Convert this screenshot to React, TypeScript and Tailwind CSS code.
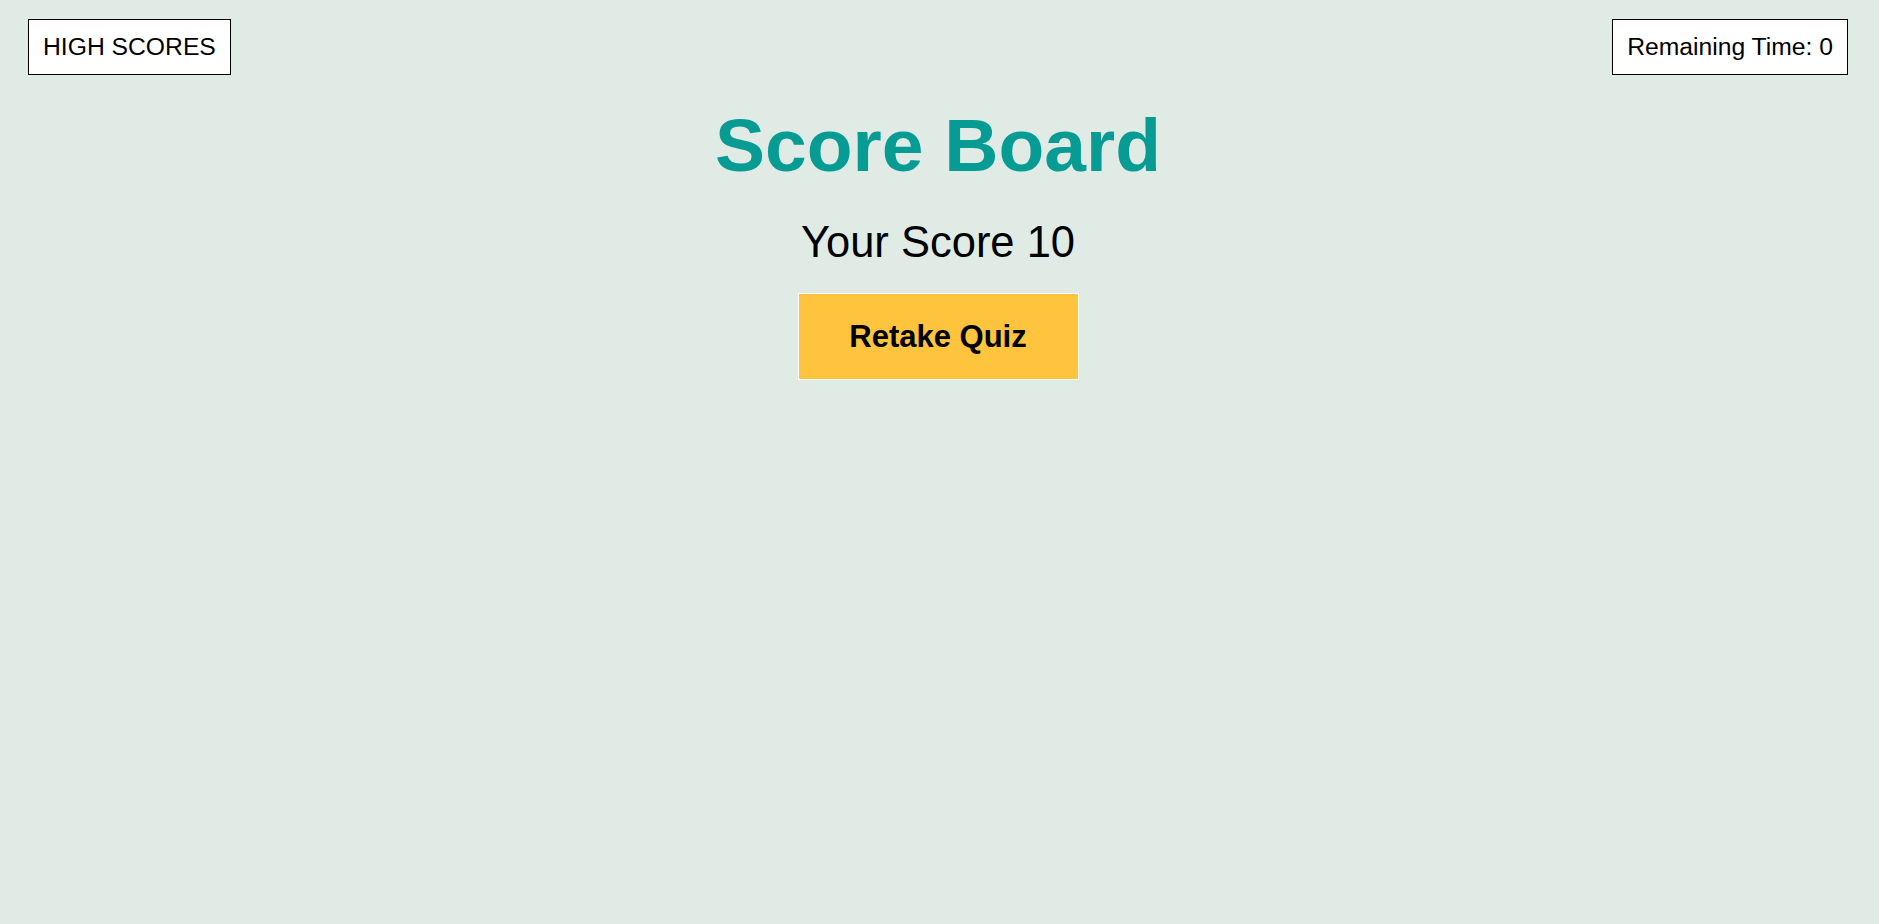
import React from "react";

export default function App() {
  const score = 10;
  const remaining = 0;

  return (
    <div className="min-h-screen w-full bg-[#e0ebe5] font-['Liberation_Sans',Arial,sans-serif] text-black">
      {/* top bar */}
      <header className="flex items-start justify-between pl-[28px] pr-[31px] pt-[19px]">
        <button className="border border-black bg-white px-[14px] h-[56px] text-[24.7px] leading-none">
          HIGH SCORES
        </button>
        <div className="border border-black bg-white px-[14px] h-[56px] flex items-center text-[24.7px] leading-none">
          Remaining Time: {remaining}
        </div>
      </header>

      {/* board */}
      <main className="flex flex-col items-center pr-[3px]">
        <h1 className="mt-[27px] h-[86px] text-[75px] leading-[86px] font-bold text-[#069c94]">
          Score Board
        </h1>
        <p className="mt-[30px] h-[48px] text-[43.5px] leading-[48px]">Your Score {score}</p>
        <button className="mt-[27px] w-[281px] h-[87px] border border-white bg-[#ffc43e] text-[31px] font-bold leading-none">
          Retake Quiz
        </button>
      </main>
    </div>
  );
}
